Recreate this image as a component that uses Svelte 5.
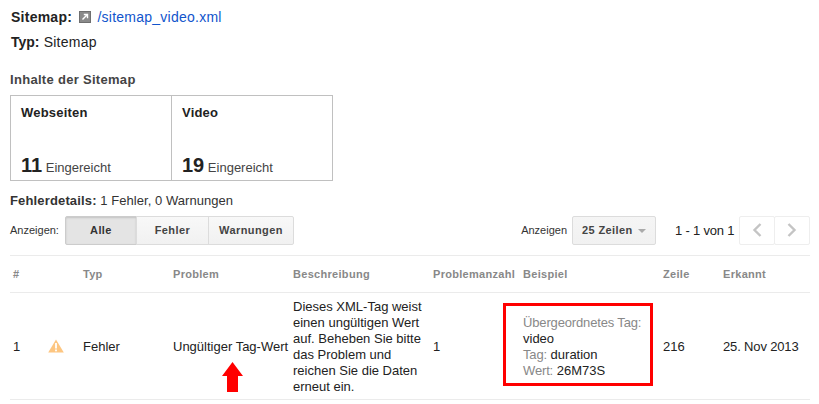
<script>
  const rows = [
    {
      nr: 1,
      typ: 'Fehler',
      problem: 'Ungültiger Tag-Wert',
      text: 'Dieses XML-Tag weist einen ungültigen Wert auf. Beheben Sie bitte das Problem und reichen Sie die Daten erneut ein.',
      anzahl: 1,
      zeile: 216,
      datum: '25. Nov 2013'
    }
  ];
  const heads = ['#', '', 'Typ', 'Problem', 'Beschreibung', 'Problemanzahl', 'Beispiel', 'Zeile', 'Erkannt'];
  const filters = ['Alle', 'Fehler', 'Warnungen'];
</script>

<div class="page">
  <div class="meta first">
    <b class="lbl">Sitemap:</b>
    <svg class="ext" width="12" height="12" viewBox="0 0 12 12">
      <rect x="0.5" y="0.5" width="11" height="11" fill="#8a8a8a" stroke="#6f6f6f" />
      <path d="M3.5 8.5 L8.2 3.8 M4.8 3.5 H8.5 V7.2" stroke="#fff" stroke-width="1.4" fill="none" />
    </svg>
    <a href="#top">/sitemap_video.xml</a>
  </div>
  <div class="meta"><b class="typ">Typ:</b> Sitemap</div>

  <h3>Inhalte der Sitemap</h3>
  <div class="cards">
    <div class="card">
      <div class="card-title">Webseiten</div>
      <div class="card-val"><b>11</b> Eingereicht</div>
    </div>
    <div class="card">
      <div class="card-title">Video</div>
      <div class="card-val"><b>19</b> Eingereicht</div>
    </div>
  </div>

  <div class="details"><b>Fehlerdetails:</b> 1 Fehler, 0 Warnungen</div>

  <div class="toolbar">
    <span class="small">Anzeigen:</span>
    <div class="group">
      {#each filters as f, i}
        <button class:active={i === 0}>{f}</button>
      {/each}
    </div>
    <div class="right">
      <span class="small">Anzeigen</span>
      <button class="select">25 Zeilen <i class="caret"></i></button>
      <span class="count">1 - 1 von 1</span>
      <div class="pager">
        <button aria-label="Zurück">
          <svg width="12" height="16" viewBox="0 0 12 16"><path d="M9.5 2 L3.5 8 L9.5 14" fill="none" stroke="#c4c4c4" stroke-width="2.4" /></svg>
        </button>
        <button aria-label="Weiter">
          <svg width="12" height="16" viewBox="0 0 12 16"><path d="M2.5 2 L8.5 8 L2.5 14" fill="none" stroke="#c4c4c4" stroke-width="2.4" /></svg>
        </button>
      </div>
    </div>
  </div>

  <table>
    <colgroup>
      <col style="width:34px" /><col style="width:36px" /><col style="width:90px" /><col style="width:120px" />
      <col style="width:140px" /><col style="width:90px" /><col style="width:140px" /><col style="width:60px" /><col />
    </colgroup>
    <thead>
      <tr>
        {#each heads as h}
          <th>{h}</th>
        {/each}
      </tr>
    </thead>
    <tbody>
      {#each rows as r}
        <tr>
          <td>{r.nr}</td>
          <td>
            <svg class="warn" width="16" height="14" viewBox="0 0 16 14">
              <path d="M8 0.5 L15.8 13.5 H0.2 Z" fill="#fdc681" />
              <rect x="7.1" y="4" width="1.8" height="5.5" fill="#fff" />
              <rect x="7.1" y="10.5" width="1.8" height="1.8" fill="#fff" />
            </svg>
          </td>
          <td>{r.typ}</td>
          <td class="rel">
            {r.problem}
            <svg class="arrow" width="21" height="30" viewBox="0 0 21 30">
              <path d="M10.5 0 L21 14 H16 V30 H5 V14 H0 Z" fill="#f00" />
            </svg>
          </td>
          <td class="desc">{r.text}</td>
          <td>{r.anzahl}</td>
          <td class="rel">
            <div class="mark"></div>
            <span class="gray">Übergeordnetes Tag:</span><br />video<br />
            <span class="gray">Tag:</span> duration<br />
            <span class="gray">Wert:</span> 26M73S
          </td>
          <td>{r.zeile}</td>
          <td class="date">{r.datum}</td>
        </tr>
      {/each}
    </tbody>
  </table>
</div>

<style>
  :global(body) {
    margin: 0;
    background: #fff;
  }

  .page {
    width: 800px;
    height: 404px;
    padding-left: 10px;
    font-family: 'Liberation Sans', Arial, sans-serif;
    font-size: 13px;
    color: #222;
    overflow: hidden;
  }

  .meta {
    height: 25px;
    line-height: 25px;
    padding-left: 1px;
    font-size: 14px;
    letter-spacing: 0.25px;
    white-space: nowrap;
  }

  .meta.first {
    padding-top: 5px;
  }

  .lbl {
    margin-right: 3px;
  }

  .typ {
    letter-spacing: 0;
  }

  .ext {
    vertical-align: -1px;
    margin-right: 2px;
  }

  a {
    color: #1155cc;
    text-decoration: none;
  }

  h3 {
    margin: 17px 0 0;
    font-size: 13px;
    line-height: 16px;
    font-weight: bold;
    letter-spacing: 0.3px;
    color: #444;
  }

  .cards {
    display: flex;
    width: 323px;
    height: 86px;
    margin-top: 7px;
    border: 1px solid #c0c0c0;
    box-sizing: border-box;
  }

  .card {
    flex: 1;
    padding: 9px 10px 0;
  }

  .card + .card {
    border-left: 1px solid #c0c0c0;
  }

  .card-title {
    font-weight: bold;
    line-height: 16px;
    letter-spacing: 0.2px;
  }

  .card-val {
    margin-top: 32px;
    font-size: 13px;
    color: #444;
    line-height: 24px;
  }

  .card-val b {
    font-size: 20px;
    color: #222;
  }

  .details {
    margin-top: 12px;
    line-height: 16px;
    font-size: 13px;
    letter-spacing: 0.05px;
    color: #333;
  }

  .details b {
    letter-spacing: 0.15px;
  }

  .toolbar {
    display: flex;
    align-items: center;
    height: 30px;
    margin-top: 6px;
  }

  .small {
    font-size: 11px;
    color: #333;
  }

  .group {
    display: flex;
    margin-left: 6px;
  }

  button {
    font-family: inherit;
    box-sizing: border-box;
    height: 29px;
    padding: 0;
    border: 1px solid #dcdcdc;
    border-radius: 2px;
    background: #f5f5f5;
    color: #444;
    font-size: 11px;
    font-weight: bold;
    letter-spacing: 0.4px;
  }

  .group button {
    width: 73px;
    border-radius: 0;
    margin-left: -1px;
    background: linear-gradient(#f8f8f8, #f1f1f1);
  }

  .group button:first-child {
    width: 72px;
    margin-left: 0;
    border-radius: 2px 0 0 2px;
  }

  .group button:nth-child(3) {
    width: 86px;
    border-radius: 0 2px 2px 0;
  }

  .group button.active {
    background: #e4e4e4;
    border-color: #ccc;
    color: #333;
    box-shadow: inset 0 1px 2px rgba(0, 0, 0, 0.15);
  }

  .right {
    margin-left: auto;
    display: flex;
    align-items: center;
  }

  .select {
    width: 84px;
    margin-left: 5px;
    background: linear-gradient(#f5f5f5, #f1f1f1);
  }

  .caret {
    display: inline-block;
    margin-left: 2px;
    vertical-align: 1px;
    border: 4px solid transparent;
    border-top-color: #aaa;
    border-bottom-width: 0;
  }

  .count {
    margin-left: 19px;
    font-size: 13px;
    letter-spacing: -0.2px;
    width: 65px;
    white-space: nowrap;
  }

  .pager {
    display: flex;
  }

  .pager button {
    width: 36px;
    background: #fff;
    border-color: #eee;
    margin-left: -1px;
    display: flex;
    align-items: center;
    justify-content: center;
  }

  table {
    width: 800px;
    table-layout: fixed;
    border-collapse: collapse;
    margin-top: 10px;
    font-size: 13px;
  }

  th {
    height: 36px;
    padding: 0 0 0 3px;
    text-align: left;
    font-size: 11px;
    letter-spacing: 0.3px;
    color: #888;
    border-top: 1px solid #ebebeb;
    border-bottom: 1px solid #ebebeb;
    white-space: nowrap;
  }

  td {
    padding: 2px 0 0 3px;
    height: 104px;
    color: #222;
    border-bottom: 1px solid #ebebeb;
    line-height: 16px;
    white-space: nowrap;
  }

  td.desc {
    white-space: normal;
    padding-right: 4px;
  }

  td.date {
    letter-spacing: -0.15px;
  }

  .rel {
    position: relative;
  }

  .warn {
    display: block;
    margin: -2px 0 0 1px;
  }

  .arrow {
    position: absolute;
    left: 52px;
    top: 69px;
  }

  .mark {
    position: absolute;
    left: -17px;
    top: 10px;
    width: 150px;
    height: 83px;
    box-sizing: border-box;
    border: 3px solid #f00;
  }

  .gray {
    color: #888;
    letter-spacing: -0.15px;
  }
</style>
